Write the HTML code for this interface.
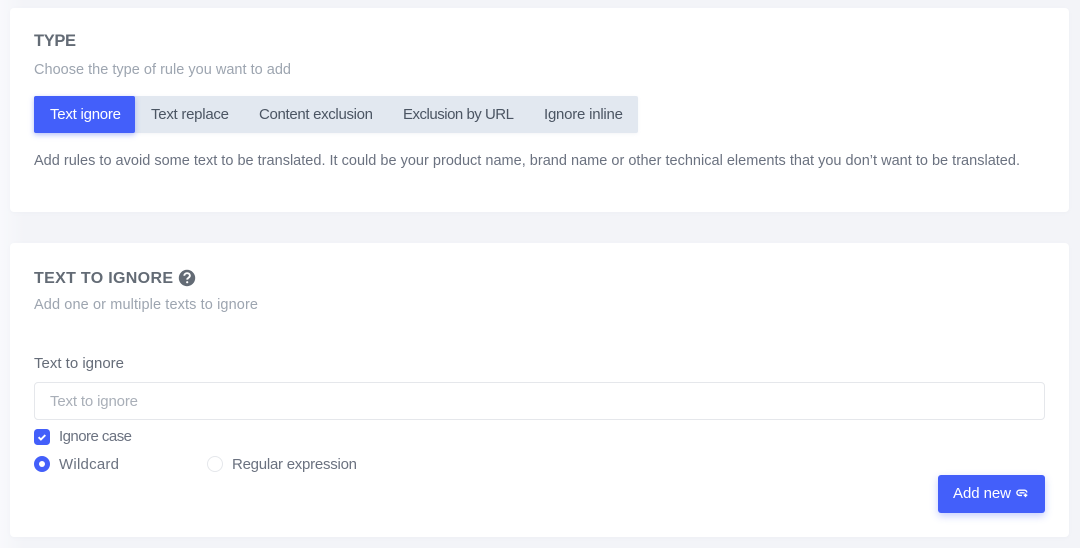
<!DOCTYPE html>
<html><head><meta charset="utf-8">
<style>
html,body{margin:0;padding:0;width:1080px;height:548px;overflow:hidden;background:#f3f4f8}
.a{position:absolute}
text{font-family:"Liberation Sans",sans-serif}
</style></head>
<body>
<div class="a" style="left:0;top:0;width:1080px;height:548px;background:linear-gradient(90deg,#f8f9fc 0,#f3f4f8 24px)"></div>
<div class="a" style="left:10px;top:8px;width:1059px;height:204px;background:#fff;border-radius:4px;box-shadow:0 1px 3px rgba(200,205,220,.1)"></div>
<div class="a" style="left:10px;top:243px;width:1059px;height:294px;background:#fff;border-radius:4px;box-shadow:0 1px 3px rgba(200,205,220,.1)"></div>
<div class="a" style="left:34px;top:96px;width:604px;height:37px;background:#e2e8f0;border-radius:2px;box-shadow:0 1px 3px rgba(180,190,205,.15)"></div>
<div class="a" style="left:34px;top:96px;width:101px;height:37px;background:#435ffa;border-radius:2px;box-shadow:0 2px 6px rgba(67,95,250,.35)"></div>
<div class="a" style="left:34px;top:382px;width:1009px;height:36px;background:#fff;border:1px solid #e5e7eb;border-radius:4px"></div>
<div class="a" style="left:938px;top:475px;width:107px;height:38px;background:#435ffa;border-radius:3px;box-shadow:0 3px 8px rgba(67,95,250,.3)"></div>
<svg class="a" style="left:0;top:0" width="1080" height="548" viewBox="0 0 1080 548">
<g font-size="14.5" lengthAdjust="spacing">
<text x="34" y="46" font-size="16.5" font-weight="700" fill="#636b75" textLength="42">TYPE</text>
<text x="34" y="74" fill="#9da5b0" textLength="257">Choose the type of rule you want to add</text>
<text x="50" y="119" font-size="15" fill="#fff" textLength="71">Text ignore</text>
<text x="151" y="119" font-size="15" fill="#4b5563" textLength="78">Text replace</text>
<text x="259" y="119" font-size="15" fill="#4b5563" textLength="114">Content exclusion</text>
<text x="403" y="119" font-size="15" fill="#4b5563" textLength="111">Exclusion by URL</text>
<text x="544" y="119" font-size="15" fill="#4b5563" textLength="79">Ignore inline</text>
<text x="34" y="165" fill="#6b7280" textLength="986">Add rules to avoid some text to be translated. It could be your product name, brand name or other technical elements that you don’t want to be translated.</text>
<text x="34" y="283" font-size="16" font-weight="700" fill="#636b75" textLength="139">TEXT TO IGNORE</text>
<text x="34" y="309" fill="#9da5b0" textLength="224">Add one or multiple texts to ignore</text>
<text x="34" y="368" font-size="15" fill="#656c78" textLength="90">Text to ignore</text>
<text x="50" y="406" font-size="15" fill="#a9afb8" textLength="88">Text to ignore</text>
<text x="59" y="441" font-size="15" fill="#6b7280" textLength="73">Ignore case</text>
<text x="59" y="469" font-size="15" fill="#6b7280" textLength="60">Wildcard</text>
<text x="232" y="469" font-size="15" fill="#6b7280" textLength="125">Regular expression</text>
<text x="953" y="498" font-size="15" fill="#fff" textLength="58">Add new</text>
</g>
<circle cx="187" cy="278" r="8.2" fill="#636b75"/>
<path d="M184.3 275.8c0-1.6 1.2-2.6 2.8-2.6s2.8 1 2.8 2.4c0 2.2-2.7 2.1-2.7 4" fill="none" stroke="#fff" stroke-width="1.9"/>
<circle cx="187.2" cy="282.2" r="1.1" fill="#fff"/>
<rect x="34" y="429" width="16" height="16" rx="3.5" fill="#435ffa"/>
<path d="M38.6 437.2l2.3 2.3 4.4-4.4" fill="none" stroke="#fff" stroke-width="1.9"/>
<circle cx="42" cy="464" r="8" fill="#435ffa"/>
<circle cx="42" cy="464" r="3" fill="#fff"/>
<circle cx="215" cy="464" r="7.5" fill="#fff" stroke="#e5e7eb"/>
<path d="M1021 490.2h3.5a2.3 2.3 0 0 1 2.3 2.3M1022 495.4h-2.5a2.6 2.6 0 0 1 0-5.2h1.5M1019.5 492.8h5" fill="none" stroke="#fff" stroke-width="1.4"/>
<path d="M1025.5 493.5v3.6M1023.7 495.3h3.6" fill="none" stroke="#fff" stroke-width="1.5"/>
</svg>
</body></html>
